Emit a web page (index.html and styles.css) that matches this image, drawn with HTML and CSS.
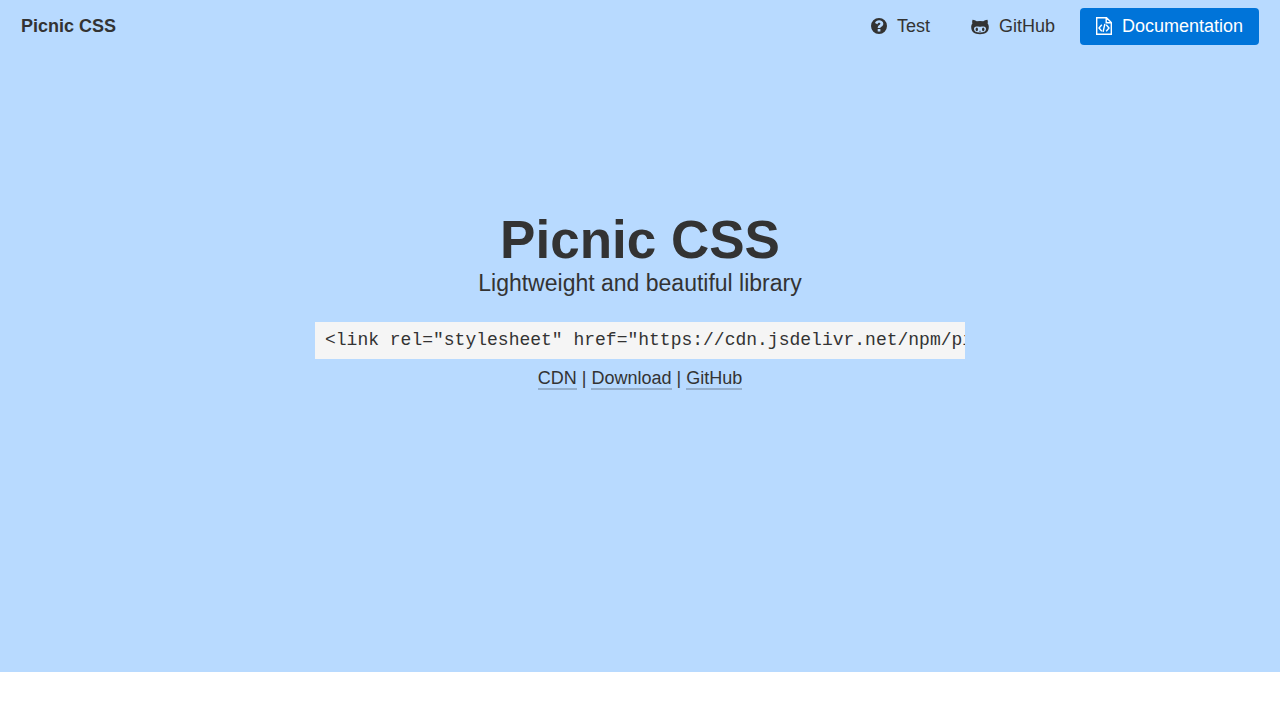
FILE: index.html
```html
<!DOCTYPE html>
<html lang="en">
<head>
  <meta charset="UTF-8" />
  <meta name="viewport" content="width=device-width, initial-scale=1.0"/>
  <title>Picnic CSS</title>
  <link rel="stylesheet" href="styles.css">
</head>
<body>

  <header class="hero">
    <nav>
      <a href="#" class="brand">Picnic CSS</a>
      <div class="menu">
        <a href="#test" class="pseudo button">
          <svg class="icon" viewBox="0 0 16 16" aria-hidden="true">
            <path fill="currentColor" fill-rule="evenodd" d="M8 0a8 8 0 1 0 0 16A8 8 0 0 0 8 0zM6.700 11h2.700v2.600H6.700zM4 5.100C4.700 3.200 6.100 2.300 8.100 2.300c2.300 0 4.200 1.400 4.200 3.500 0 1.500-.8 2.300-1.900 2.900-.8.5-1 .7-1 1.400H6.700c0-1.900.6-2.500 1.700-3.200.7-.4 1-.6 1-1.100 0-.6-.5-1-1.200-1-.8 0-1.200.4-1.800 1.500z"/>
          </svg>
          Test
        </a>
        <a href="#github" class="pseudo button">
          <svg class="icon wide" viewBox="0 0 18 16" aria-hidden="true">
            <path fill="currentColor" fill-rule="evenodd" d="M1.600.8C3 .7 4.600 1.500 5.700 2.300a15 15 0 0 1 6.600 0C13.400 1.500 15 .7 16.400.8c.6 1.500.5 2.800.2 3.700.9 1.100 1.200 2.200 1.200 3.600 0 5.100-3.300 7.100-8.800 7.100S.2 13.200.2 8.100c0-1.400.3-2.500 1.200-3.600C1.100 3.600 1 2.300 1.600.8zM5.500 7.600c-1.600 0-2.500 1-2.500 2.500 0 2.500 2.100 3.500 6 3.500s6-1 6-3.500c0-1.500-.9-2.500-2.500-2.500-1.300 0-2.100.2-3.500.2s-2.200-.2-3.500-.2z"/>
            <ellipse fill="currentColor" cx="5.800" cy="10.400" rx="1.200" ry="1.800"/>
            <ellipse fill="currentColor" cx="12.200" cy="10.400" rx="1.200" ry="1.800"/>
            <path stroke="currentColor" d="M8.400 12.300h1.200"/>
          </svg>
          GitHub
        </a>
        <a href="#documentation" class="button">
          <svg class="icon file" viewBox="0 0 16 18" fill="none" stroke="currentColor" stroke-width="1.400" aria-hidden="true">
            <path d="M.7.7h9.800l4.800 4.800v11.800H.7zM10.200.7v5.100h5.100M5.800 7.800L3 11l2.800 3.200M10.200 7.800L13 11l-2.800 3.200M8.900 6.900l-1.800 8"/>
          </svg>
          Documentation
        </a>
      </div>
    </nav>

    <div class="intro">
      <h1>Picnic CSS</h1>
      <p class="tagline">Lightweight and beautiful library</p>
      <pre><code>&lt;link rel="stylesheet" href="https://cdn.jsdelivr.net/npm/picnic"&gt;</code></pre>
      <p class="links">
        <a href="#cdn">CDN</a> |
        <a href="#download">Download</a> |
        <a href="#github">GitHub</a>
      </p>
    </div>
  </header>

</body>
</html>
```
FILE: styles.css
```css
* {
  box-sizing: border-box;
  margin: 0;
  padding: 0;
}

body {
  font-family: Arial, "Liberation Sans", sans-serif;
  font-size: 18px;
  line-height: 21px;
  color: #333;
  background: #fff;
}

a {
  color: inherit;
  text-decoration: none;
}

.hero {
  display: flex;
  flex-direction: column;
  min-height: calc(100vh - 48px);
  background: #b8daff;
}

nav {
  display: flex;
  justify-content: space-between;
  align-items: center;
  padding: 8px 21px;
}

.brand {
  font-weight: 700;
}

.menu {
  display: flex;
  gap: 9px;
}

.button {
  display: flex;
  align-items: center;
  gap: 10px;
  padding: 8px 16px;
  border-radius: 4px;
  background: #0074d9;
  color: #fff;
}

.button:hover {
  background: #0063b8;
}

.pseudo {
  background: none;
  color: #333;
}

.pseudo:hover {
  background: rgba(0, 0, 0, 0.1);
}

.icon {
  width: 16px;
  height: 16px;
  margin-bottom: 2px;
}

.icon.wide {
  width: 18px;
  margin-bottom: 0;
}

.icon.file {
  height: 18px;
}

.intro {
  flex: 1;
  width: 100%;
  max-width: 650px;
  margin: 0 auto;
  padding-bottom: 126px;
  display: flex;
  flex-direction: column;
  justify-content: center;
  text-align: center;
}

h1 {
  font-size: 53px;
  line-height: 60px;
}

.tagline {
  font-size: 23px;
  line-height: 26px;
}

pre {
  margin: 26px 0 9px;
  padding: 8px 10px;
  overflow: hidden;
  background: #f5f5f5;
  text-align: left;
}

pre code {
  display: block;
  font-family: "Liberation Mono", monospace;
  font-size: 18px;
}

.links a {
  border-bottom: 2px solid #93aecc;
}

.links a:hover {
  border-color: #333;
}

@media (max-width: 600px) {
  nav {
    flex-wrap: wrap;
  }
}
```
